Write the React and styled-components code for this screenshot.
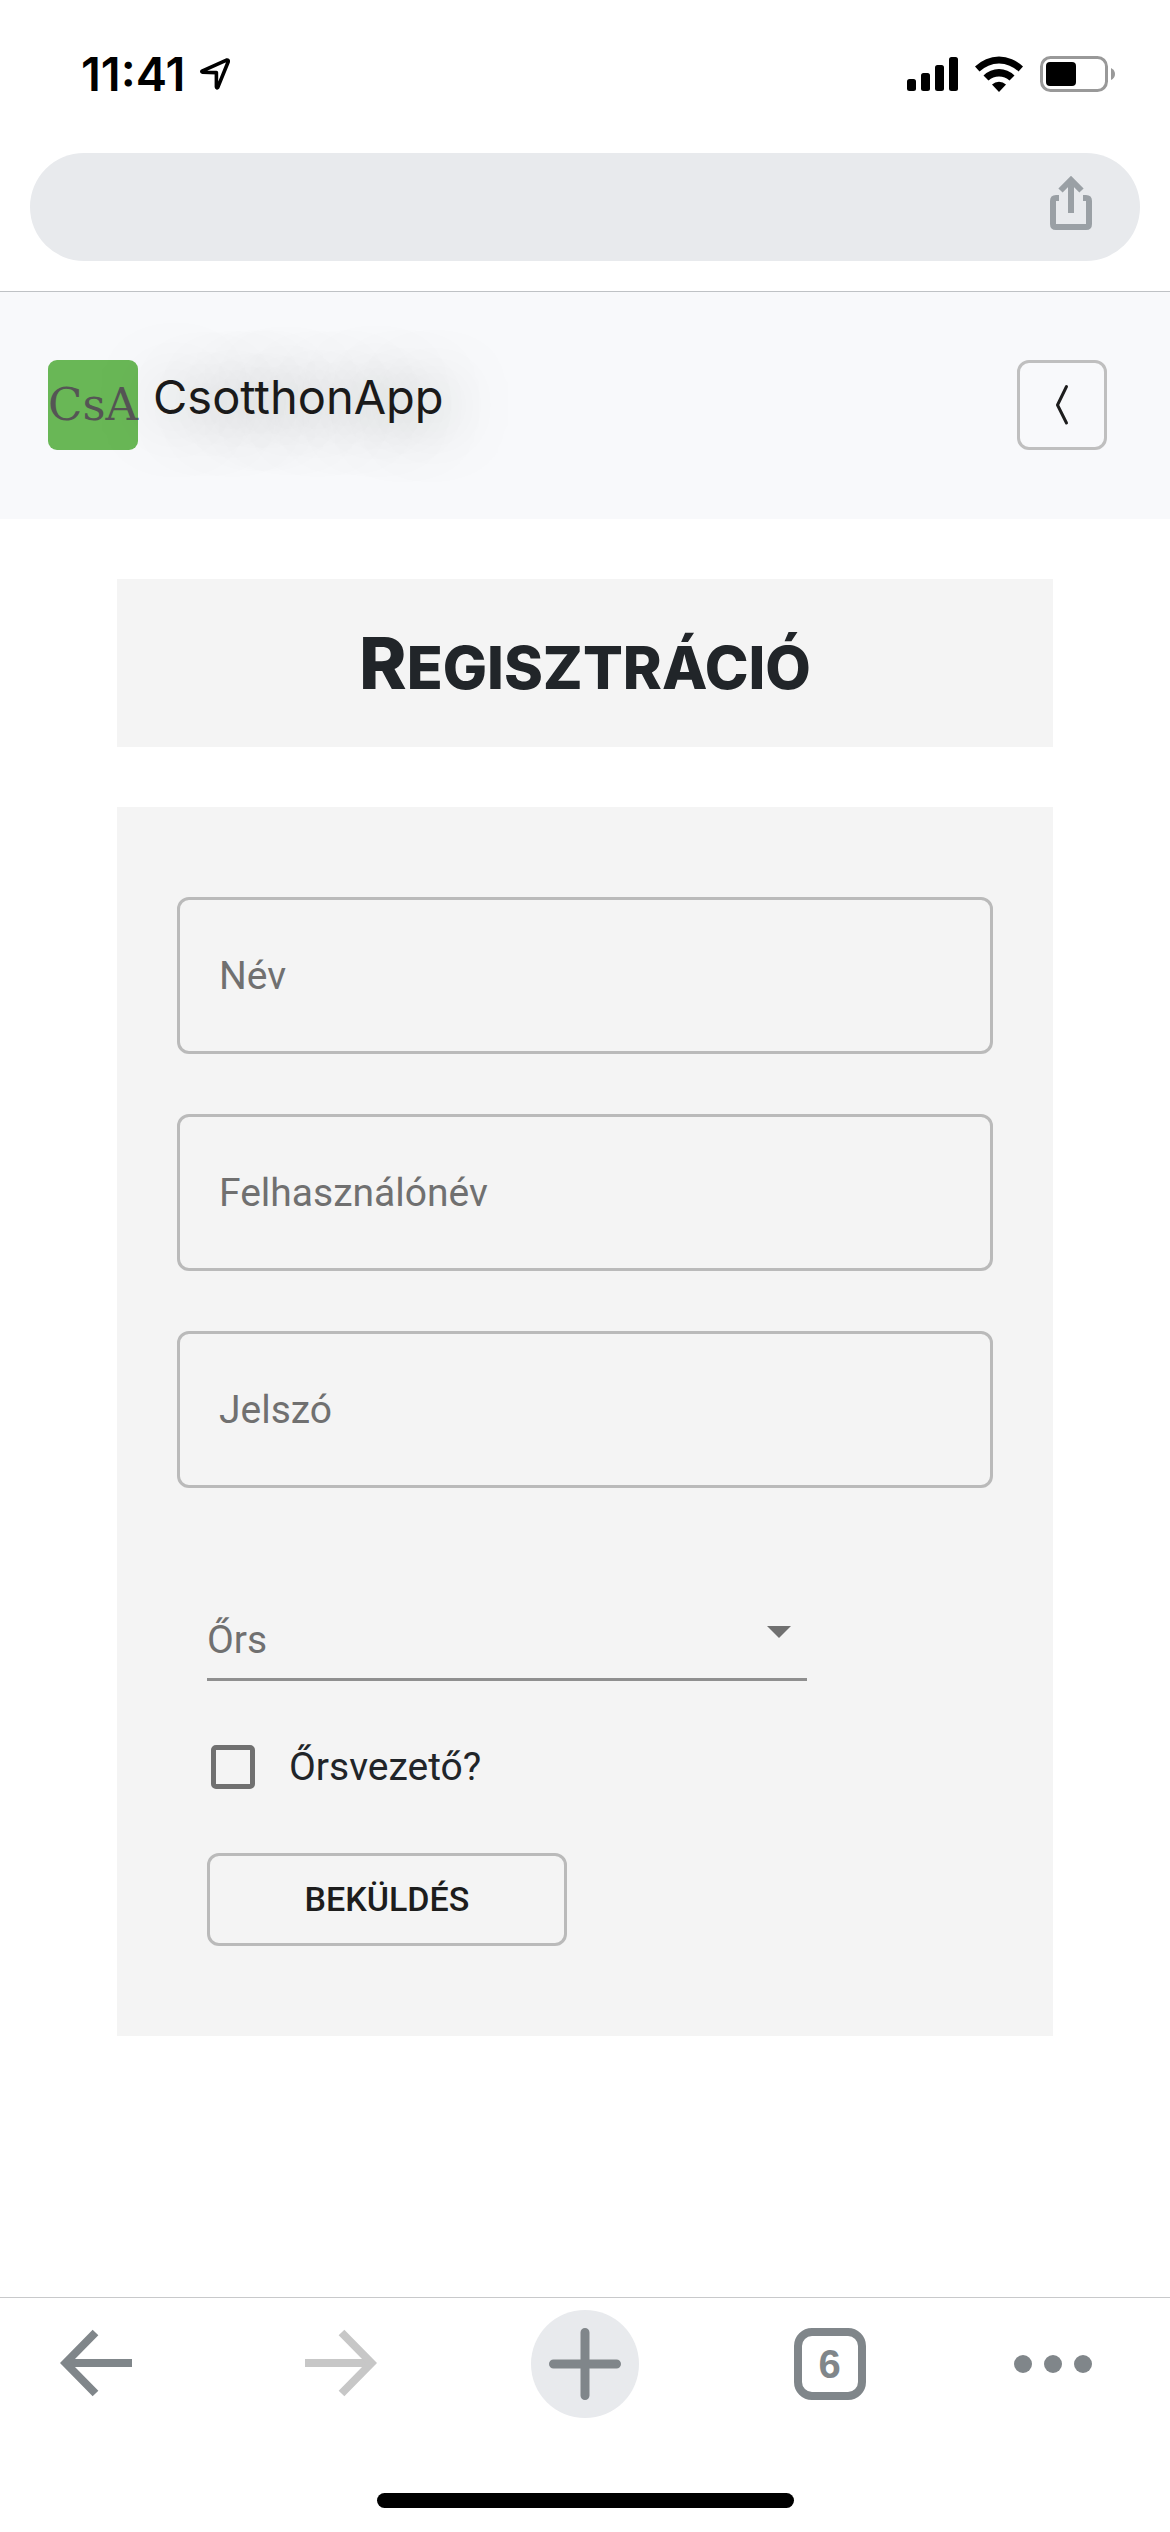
import React from "react";
import styled, { createGlobalStyle } from "styled-components";

const GlobalStyle = createGlobalStyle`
  *, *::before, *::after { box-sizing: border-box; }
  body { margin: 0; background: #fff; font-family: Inter, "Liberation Sans", sans-serif; }
  button, input, select { font: inherit; color: inherit; margin: 0; }
  svg { flex-shrink: 0; }
`;

const Screen = styled.div`
  display: flex;
  flex-direction: column;
  min-height: 100vh;
`;

const StatusBar = styled.div`
  display: flex;
  align-items: center;
  justify-content: space-between;
  height: 153px;
  padding: 0 54px 5px 81px;
  color: #000;
`;

const StatusGroup = styled.div`
  display: flex;
  align-items: center;
  gap: ${(p) => p.$gap}px;
`;

const Clock = styled.span`
  font-size: 47px;
  font-weight: 600;
  line-height: 54px;
`;

const AddressArea = styled.div`
  padding: 0 30px 30px;
  border-bottom: 1px solid #bfc2c5;
`;

const AddressBar = styled.div`
  display: flex;
  align-items: center;
  justify-content: flex-end;
  height: 108px;
  padding: 0 48px 8px 0;
  border-radius: 54px;
  background: #e8eaed;
`;

const PlainButton = styled.button`
  display: flex;
  align-items: center;
  justify-content: center;
  padding: 0;
  border: 0;
  background: none;
`;

const SiteHeader = styled.header`
  display: flex;
  align-items: center;
  justify-content: space-between;
  padding: 68px 63px 69px 48px;
  background: #f8f9fb;
`;

const Brand = styled.a`
  display: flex;
  align-items: flex-start;
  gap: 15px;
  height: 90px;
  color: #1a1a1a;
  text-decoration: none;
`;

const Logo = styled.span`
  display: flex;
  align-items: center;
  justify-content: center;
  width: 90px;
  height: 90px;
  border-radius: 9px;
  background: #69b756;
  color: #555;
  font: 45px/90px "DejaVu Serif", serif;
`;

const BrandName = styled.span`
  font-size: 47px;
  line-height: 74px;
  text-shadow: 6px 3px 60px rgba(0, 45, 15, 0.52);
`;

const MenuButton = styled(PlainButton)`
  width: 90px;
  height: 90px;
  border: 3px solid #bfbfbf;
  border-radius: 12px;
`;

const Main = styled.main`
  display: flex;
  flex: 1;
  flex-direction: column;
  gap: 60px;
  padding: 60px 10%;
`;

const Title = styled.h1`
  margin: 0;
  padding: 40px 0;
  background: #f4f4f4;
  color: #212529;
  font-size: 72px;
  font-weight: 800;
  line-height: 88px;
  text-align: center;
`;

const SmallCaps = styled.span`
  font-size: 59px;
  line-height: 1;
`;

const Form = styled.form`
  display: flex;
  flex-direction: column;
  align-items: flex-start;
  padding: 90px 60px;
  background: #f4f4f4;
  font-family: Roboto, sans-serif;
  font-size: 39px;
  line-height: 48px;
`;

const Fields = styled.div`
  display: grid;
  gap: 60px;
  width: 100%;
`;

const Stack = styled.div`
  display: grid;
  align-items: center;
  color: #707070;

  > * { grid-area: 1 / 1; }
  > label { pointer-events: none; }
`;

const FieldLabel = styled.label`
  padding-left: 42px;
`;

const TextInput = styled.input`
  width: 100%;
  height: 157px;
  padding: 0 42px;
  border: 3px solid #bababa;
  border-radius: 12px;
  background: transparent;
`;

const Options = styled.div`
  display: flex;
  flex-direction: column;
  align-items: flex-start;
  gap: 62px;
  width: 100%;
  padding: 97px 30px 0;
`;

const SelectStack = styled(Stack)`
  width: 600px;
  max-width: 100%;
  height: 96px;
  border-bottom: 3px solid #8f8f8f;

  > label { align-self: end; padding-bottom: 14px; }
  > svg { justify-self: end; margin-right: 16px; pointer-events: none; }
`;

const Select = styled.select`
  width: 100%;
  height: 93px;
  padding: 0;
  border: 0;
  background: transparent;
  appearance: none;
`;

const CheckRow = styled.label`
  display: flex;
  align-items: center;
  gap: 34px;
  padding-left: 4px;
  color: #212529;
`;

const Checkbox = styled.input`
  width: 44px;
  height: 44px;
  border: 5px solid #707070;
  border-radius: 5px;
  appearance: none;

  &:checked { background: #707070; }
`;

const SubmitButton = styled.button`
  width: 360px;
  height: 93px;
  padding: 0 0 2px;
  border: 3px solid #bababa;
  border-radius: 12px;
  background: transparent;
  color: #1d1d1d;
  font-size: 34px;
  font-weight: 500;
  text-transform: uppercase;
`;

const Toolbar = styled.nav`
  display: flex;
  justify-content: space-between;
  padding: 12px 42px 75px;
  border-top: 1px solid #c8c9cb;
`;

const ToolButton = styled(PlainButton)`
  width: 108px;
  height: 108px;
  padding-right: ${(p) => p.$inset || 0}px;
  border-radius: 50%;
  background: ${(p) => (p.$filled ? "#e8eaed" : "none")};
  color: ${(p) => (p.disabled ? "#c7c7c7" : "#80868a")};
`;

const TabCount = styled.span`
  display: flex;
  align-items: center;
  justify-content: center;
  width: 72px;
  height: 72px;
  border: 8px solid #80868a;
  border-radius: 18px;
  font: bold 40px/48px "Liberation Sans", sans-serif;
`;

const HomeIndicator = styled.div`
  align-self: center;
  width: 417px;
  height: 15px;
  margin-bottom: 24px;
  border-radius: 8px;
  background: #000;
`;

const LocationIcon = () => (
  <svg width="30" height="32" viewBox="0 0 30 32" fill="none" stroke="#000" strokeWidth="3.6" strokeLinejoin="round">
    <path d="M2 13.2 L26.5 2.1 Q28.6 1.6 28.2 3.8 L17.8 29.4 Q16.5 30.5 16.4 29 V14.6 L2.5 14.2 Q1.5 13.8 2 13.2 Z" />
  </svg>
);

const SignalIcon = () => (
  <svg width="51" height="36" viewBox="0 0 51 36">
    <rect x="0" y="23" width="9" height="12" rx="2.5" />
    <rect x="14" y="17" width="9" height="18" rx="2.5" />
    <rect x="28" y="9" width="9" height="26" rx="2.5" />
    <rect x="42" y="1" width="9" height="34" rx="2.5" />
  </svg>
);

const WifiIcon = () => (
  <svg width="48" height="36" viewBox="0 0 48 36">
    <path d="M0 10.5 A34 34 0 0 1 48 10.5 L43.5 15.5 A28 28 0 0 0 4.5 15.5 Z" />
    <path d="M8.5 19.5 A22 22 0 0 1 39.5 19.5 L34.5 24.5 A15.5 15.5 0 0 0 13.5 24.5 Z" />
    <path d="M17 28.5 A10.5 10.5 0 0 1 31 28.5 L24 36 Z" />
  </svg>
);

const BatteryIcon = () => (
  <svg width="76" height="36" viewBox="0 0 76 36">
    <rect x="1.5" y="1.5" width="65" height="33" rx="9" fill="none" stroke="#999" strokeWidth="3" />
    <rect x="6" y="6" width="30" height="24" rx="4" />
    <path d="M71 12 Q75 14 75 18 Q75 22 71 24 Z" fill="#999" />
  </svg>
);

const ShareIcon = () => (
  <svg width="42" height="54" viewBox="0 0 42 54" fill="none" stroke="#9aa0a5" strokeWidth="6">
    <path d="M9 22 H6 Q3 22 3 25 V48 Q3 51 6 51 H36 Q39 51 39 48 V25 Q39 22 36 22 H33" />
    <path d="M21 37 V5" />
    <path d="M10.5 14.5 L21 4 L31.5 14.5" />
  </svg>
);

const ChevronIcon = () => (
  <svg width="14" height="42" viewBox="0 0 14 42" fill="none" stroke="#1d1d1d" strokeWidth="3" strokeLinecap="round" strokeLinejoin="round">
    <path d="M11.5 2.5 L2.5 21 L11.5 39" />
  </svg>
);

const BackIcon = () => (
  <svg width="72" height="76" viewBox="0 0 72 76" fill="none" stroke="currentColor" strokeWidth="8">
    <path d="M72 37 H8" />
    <path d="M35.5 6.5 L5.5 37 L35.5 67.5" />
  </svg>
);

const ForwardIcon = () => (
  <svg width="72" height="76" viewBox="0 0 72 76" fill="none" stroke="currentColor" strokeWidth="8">
    <path d="M0 37 H64" />
    <path d="M36.5 6.5 L66.5 37 L36.5 67.5" />
  </svg>
);

const PlusIcon = () => (
  <svg width="72" height="72" viewBox="0 0 72 72" stroke="currentColor" strokeWidth="9" strokeLinecap="round">
    <path d="M36 4.5 V67.5 M4.5 36 H67.5" />
  </svg>
);

const DotsIcon = () => (
  <svg width="78" height="18" viewBox="0 0 78 18" fill="currentColor">
    <circle cx="9" cy="9" r="9" />
    <circle cx="39" cy="9" r="9" />
    <circle cx="69" cy="9" r="9" />
  </svg>
);

const ArrowDown = () => (
  <svg width="24" height="12" viewBox="0 0 24 12" fill="#707070">
    <path d="M0 0 H24 L12 12 Z" />
  </svg>
);

const Field = ({ id, label, type = "text" }) => (
  <Stack>
    <TextInput id={id} type={type} />
    <FieldLabel htmlFor={id}>{label}</FieldLabel>
  </Stack>
);

export default function App() {
  return (
    <Screen>
      <GlobalStyle />
      <StatusBar>
        <StatusGroup $gap={15}>
          <Clock>11:41</Clock>
          <LocationIcon />
        </StatusGroup>
        <StatusGroup $gap={17}>
          <SignalIcon />
          <WifiIcon />
          <BatteryIcon />
        </StatusGroup>
      </StatusBar>
      <AddressArea>
        <AddressBar>
          <PlainButton type="button"><ShareIcon /></PlainButton>
        </AddressBar>
      </AddressArea>
      <SiteHeader>
        <Brand href="#">
          <Logo>CsA</Logo>
          <BrandName>CsotthonApp</BrandName>
        </Brand>
        <MenuButton type="button"><ChevronIcon /></MenuButton>
      </SiteHeader>
      <Main>
        <Title>R<SmallCaps>EGISZTRÁCIÓ</SmallCaps></Title>
        <Form onSubmit={(e) => e.preventDefault()}>
          <Fields>
            <Field id="name" label="Név" />
            <Field id="username" label="Felhasználónév" />
            <Field id="password" label="Jelszó" type="password" />
          </Fields>
          <Options>
            <SelectStack>
              <Select id="patrol" defaultValue="">
                <option value="" />
              </Select>
              <label htmlFor="patrol">Őrs</label>
              <ArrowDown />
            </SelectStack>
            <CheckRow htmlFor="leader">
              <Checkbox id="leader" type="checkbox" />
              Őrsvezető?
            </CheckRow>
            <SubmitButton type="submit">Beküldés</SubmitButton>
          </Options>
        </Form>
      </Main>
      <Toolbar>
        <ToolButton type="button"><BackIcon /></ToolButton>
        <ToolButton type="button" disabled><ForwardIcon /></ToolButton>
        <ToolButton type="button" $filled><PlusIcon /></ToolButton>
        <ToolButton type="button"><TabCount>6</TabCount></ToolButton>
        <ToolButton type="button" $inset={42}><DotsIcon /></ToolButton>
      </Toolbar>
      <HomeIndicator />
    </Screen>
  );
}
